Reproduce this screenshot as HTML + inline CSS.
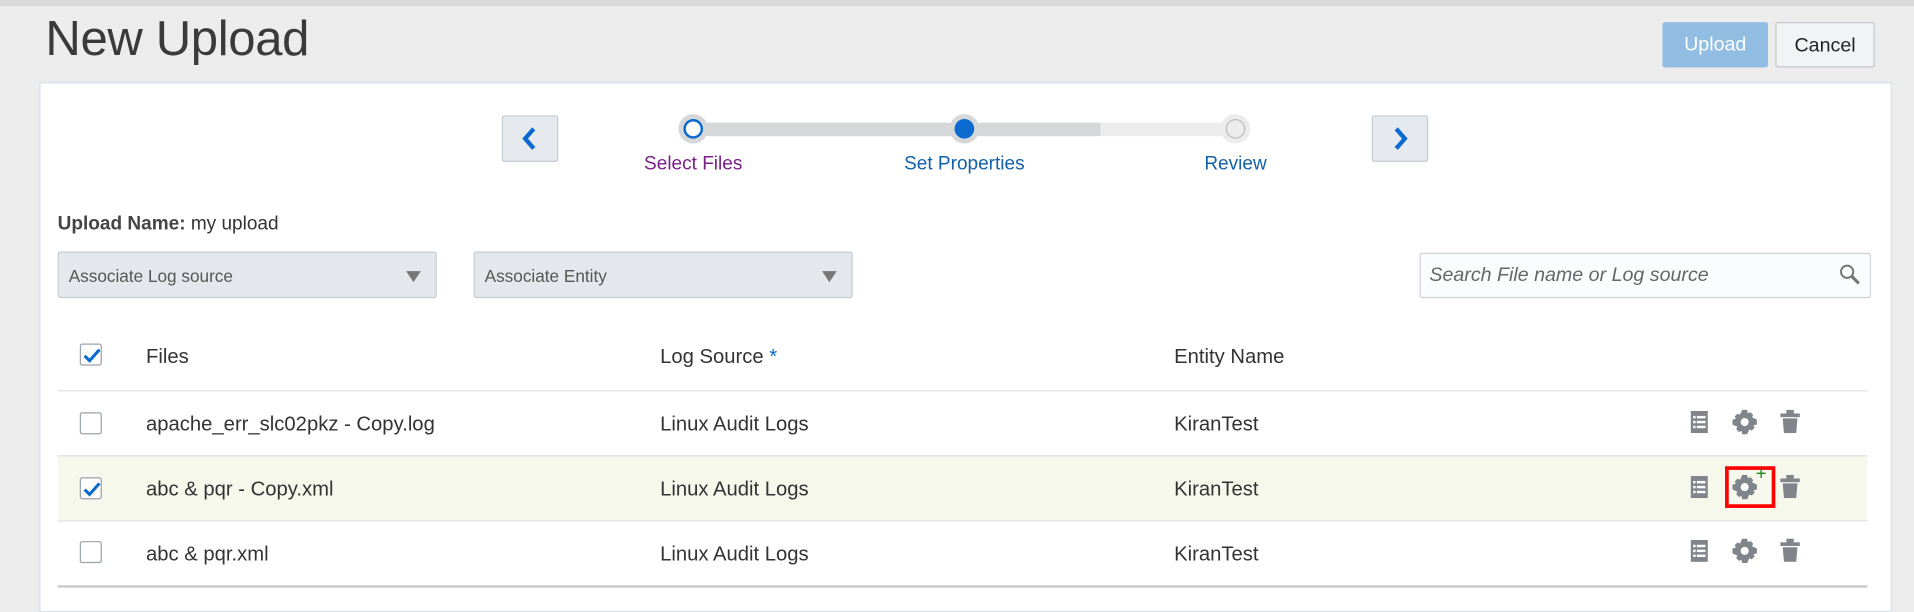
<!DOCTYPE html>
<html><head><meta charset="utf-8"><style>
html,body{margin:0;padding:0;width:1914px;height:595px;overflow:hidden;background:#ececec;font-family:"Liberation Sans",sans-serif;}
#s{position:absolute;left:0;top:0;width:1560px;height:485px;transform:scale(1.22692);transform-origin:0 0;}
.a{position:absolute;}
.btn{position:absolute;box-sizing:border-box;border-radius:2px;font-size:16px;text-align:center;}
.nav{position:absolute;width:46px;height:38px;box-sizing:border-box;border:1px solid #c4ccd4;background:#e6eaee;border-radius:2px;}
.lbl{position:absolute;top:125px;font-size:15.5px;transform:translateX(-50%);white-space:nowrap;}
.dd{position:absolute;top:205px;height:38px;box-sizing:border-box;border:1px solid #c6ccd2;background:#e4e8ec;border-radius:2px;font-size:14px;color:#555;padding:11px 0 0 8px;}
.dd:after{content:"";position:absolute;right:12px;top:15px;border-left:6px solid transparent;border-right:6px solid transparent;border-top:9px solid #777;}
.cb{position:absolute;left:65px;width:18px;height:18px;box-sizing:border-box;border:1px solid #9aa3ab;border-radius:2px;background:#fff;}
.cb.on svg{position:absolute;left:1px;top:1px;}
.row{position:absolute;left:47px;width:1475px;border-top:1px solid #e0e0e0;font-size:16.5px;color:#333;}
.row span{position:absolute;top:18px;}
.ic{position:absolute;}
</style></head><body><div id="s">
<div class="a" style="left:0;top:0;width:1560px;height:5px;background:#d9d9d9"></div>
<div class="a" style="left:37px;top:10px;font-size:40px;color:#3a3a3a;letter-spacing:-0.3px">New Upload</div>
<div class="btn" style="left:1355px;top:18px;width:86px;height:37px;background:#92bde3;color:#fff;padding-top:10px">Upload</div>
<div class="btn" style="left:1447px;top:18px;width:81px;height:37px;background:#f2f3f4;border:1px solid #c2c8ce;color:#222;padding-top:10px">Cancel</div>
<div class="a" style="left:32px;top:67px;width:1508px;height:430px;background:#fff;border:1px solid #d6dee6"></div>
<div class="nav" style="left:409px;top:94px"><svg width="46" height="38" style="position:absolute;left:-1px;top:-1px"><path d="M26 11 L19 19 L26 27" stroke="#0a6ad0" stroke-width="3.5" fill="none"/></svg></div>
<div class="nav" style="left:1118px;top:94px"><svg width="46" height="38" style="position:absolute;left:-1px;top:-1px"><path d="M20 11 L27 19 L20 27" stroke="#0a6ad0" stroke-width="3.5" fill="none"/></svg></div>
<div class="a" style="left:565px;top:100px;width:332px;height:11px;background:#d6d7d8"></div>
<div class="a" style="left:897px;top:100px;width:110px;height:11px;background:#ececec"></div>
<div class="a" style="left:553px;top:93px;width:24px;height:24px;border-radius:50%;background:#d6d7d8"></div>
<div class="a" style="width:12px;height:12px;border-radius:50%;background:#fff;border:2px solid #0a6ad0;left:557px;top:97px"></div>
<div class="a" style="left:774px;top:93px;width:24px;height:24px;border-radius:50%;background:#d6d7d8"></div>
<div class="a" style="left:778px;top:97px;width:16px;height:16px;border-radius:50%;background:#0a6ad0"></div>
<div class="a" style="left:995px;top:93px;width:24px;height:24px;border-radius:50%;background:#ececec"></div>
<div class="a" style="left:999px;top:97px;width:14px;height:14px;border-radius:50%;background:#ececec;border:1px solid #b9bec3"></div>
<div class="lbl" style="left:565px;color:#7a1f88">Select Files</div>
<div class="lbl" style="left:786px;color:#1160a8">Set Properties</div>
<div class="lbl" style="left:1007px;color:#1160a8">Review</div>
<div class="a" style="left:47px;top:174px;font-size:15.5px;color:#333"><b style="color:#444">Upload Name:</b> my upload</div>
<div class="dd" style="left:47px;width:309px">Associate Log source</div>
<div class="dd" style="left:386px;width:309px">Associate Entity</div>
<div class="a" style="left:1157px;top:206px;width:368px;height:37px;box-sizing:border-box;border:1px solid #cfd4d9;background:#fbfcfd;border-radius:2px;font-size:16px;font-style:italic;color:#666;padding:9px 0 0 7px">Search File name or Log source
<svg width="20" height="20" style="position:absolute;right:6px;top:7px"><circle cx="7.5" cy="7.5" r="5" stroke="#777" stroke-width="1.6" fill="none"/><path d="M11 11 L17 17" stroke="#777" stroke-width="2.6"/></svg></div>
<div class="cb on" style="top:280px"><svg width="16" height="16"><path d="M2 8 L6 12 L14 3" stroke="#0a6ad0" stroke-width="2.5" fill="none"/></svg></div>
<div class="a" style="left:119px;top:282px;font-size:16.5px;color:#333">Files</div>
<div class="a" style="left:538px;top:282px;font-size:16.5px;color:#333">Log Source <span style="color:#0a6ad0">*</span></div>
<div class="a" style="left:957px;top:282px;font-size:16.5px;color:#333">Entity Name</div>
<div class="row" style="top:318px;height:52px"><span style="left:72px">apache_err_slc02pkz - Copy.log</span><span style="left:491px">Linux Audit Logs</span><span style="left:910px">KiranTest</span></div>
<div class="row" style="top:371px;height:52px;background:#f7f8ec"><span style="left:72px">abc &amp; pqr - Copy.xml</span><span style="left:491px">Linux Audit Logs</span><span style="left:910px">KiranTest</span></div>
<div class="row" style="top:424px;height:52px;border-bottom:2px solid #ccc"><span style="left:72px">abc &amp; pqr.xml</span><span style="left:491px">Linux Audit Logs</span><span style="left:910px">KiranTest</span></div>
<div class="cb" style="top:336px"></div>
<div class="cb on" style="top:389px"><svg width="16" height="16"><path d="M2 8 L6 12 L14 3" stroke="#0a6ad0" stroke-width="2.5" fill="none"/></svg></div>
<div class="cb" style="top:441px"></div>

<svg class="ic" width="0" height="0"><defs>
<g id="doc"><rect x="0" y="0" width="14" height="18" fill="#80858b"/><g fill="#fff"><rect x="2" y="4" width="2" height="2"/><rect x="5" y="4" width="7" height="2"/><rect x="2" y="8" width="2" height="2"/><rect x="5" y="8" width="7" height="2"/><rect x="2" y="12" width="2" height="2"/><rect x="5" y="12" width="7" height="2"/></g></g>
<g id="gear"><path d="M8 0h4l.6 2.8 2-.9 2.3 2.3-.9 2L20 8v4l-2.8.6.9 2-2.3 2.3-2-.9L12 20H8l-.6-2.8-2 .9-2.3-2.3.9-2L0 12V8l2.8-.6-.9-2 2.3-2.3 2 .9z" fill="#80858b"/><circle cx="10" cy="10" r="3.3" fill="#fff"/></g>
<g id="trash"><rect x="0" y="3" width="16" height="3" fill="#80858b"/><rect x="5" y="0" width="6" height="4" fill="#80858b"/><path d="M2 7h12l-1 12H3z" fill="#80858b"/></g>
</defs></svg>
<svg class="ic" style="left:1378px;top:335px" width="14" height="18"><use href="#doc"/></svg>
<svg class="ic" style="left:1412px;top:334px" width="20" height="20"><use href="#gear"/></svg>
<svg class="ic" style="left:1451px;top:334px" width="16" height="19"><use href="#trash"/></svg>
<svg class="ic" style="left:1378px;top:388px" width="14" height="18"><use href="#doc"/></svg>
<svg class="ic" style="left:1412px;top:387px" width="20" height="20"><use href="#gear"/></svg>
<div class="a" style="left:1406px;top:380px;width:41px;height:34px;box-sizing:border-box;border:3px solid #f00"></div>
<div class="a" style="left:1431px;top:378px;font-size:15px;color:#1a8a1a">+</div>
<svg class="ic" style="left:1451px;top:387px" width="16" height="19"><use href="#trash"/></svg>
<svg class="ic" style="left:1378px;top:440px" width="14" height="18"><use href="#doc"/></svg>
<svg class="ic" style="left:1412px;top:439px" width="20" height="20"><use href="#gear"/></svg>
<svg class="ic" style="left:1451px;top:439px" width="16" height="19"><use href="#trash"/></svg>
</div></body></html>
